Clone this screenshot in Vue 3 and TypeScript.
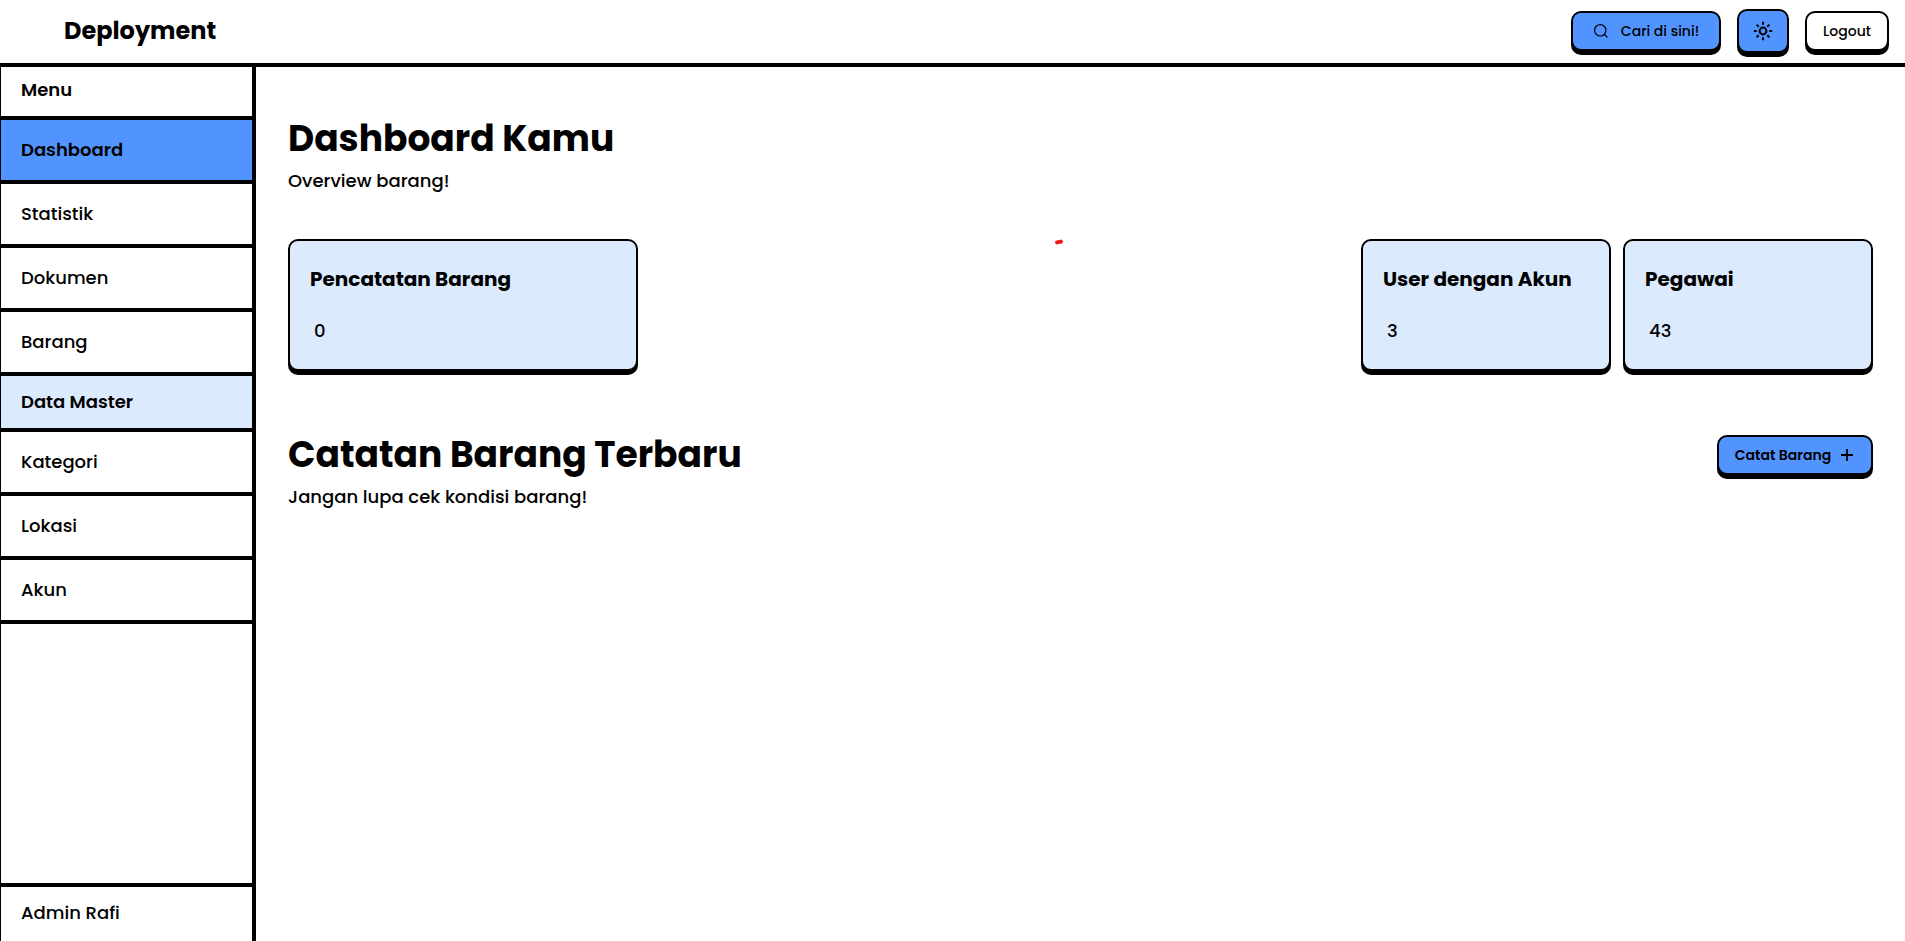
<script setup lang="ts">
interface MenuItem {
  label: string
  active?: boolean
}

const mainMenu: MenuItem[] = [
  { label: 'Dashboard', active: true },
  { label: 'Statistik' },
  { label: 'Dokumen' },
  { label: 'Barang' },
]
const masterMenu: MenuItem[] = [{ label: 'Kategori' }, { label: 'Lokasi' }, { label: 'Akun' }]
</script>

<template>
  <div class="app">
    <header class="topbar">
      <a class="brand" href="#">Deployment</a>
      <div class="actions">
        <button class="btn primary search" type="button">
          <svg width="16" height="16" viewBox="0 0 16 16" fill="none" stroke="currentColor" stroke-width="1.2" stroke-linecap="round">
            <circle cx="7.3" cy="7.3" r="5.7" />
            <path d="M11.5 11.5L14.2 14.2" />
          </svg>
          Cari di sini!
        </button>
        <button class="btn primary theme" type="button" aria-label="Tema">
          <svg width="20" height="20" viewBox="0 0 20 20" fill="none" stroke="currentColor" stroke-width="2">
            <circle cx="10" cy="10" r="3.4" />
            <path d="M10 .8v3M10 16.2v3M.8 10h3M16.2 10h3M3.6 3.6l2.1 2.1M14.3 14.3l2.1 2.1M3.6 16.4l2.1-2.1M14.3 5.7l2.1-2.1" />
          </svg>
        </button>
        <button class="btn" type="button">Logout</button>
      </div>
    </header>

    <div class="body">
      <aside class="sidebar">
        <div class="group">Menu</div>
        <nav aria-label="Menu">
          <a v-for="item in mainMenu" :key="item.label" href="#" class="item" :class="{ active: item.active }">{{ item.label }}</a>
        </nav>
        <div class="group tinted">Data Master</div>
        <nav aria-label="Data Master">
          <a v-for="item in masterMenu" :key="item.label" href="#" class="item">{{ item.label }}</a>
        </nav>
        <div class="user">Admin Rafi</div>
      </aside>

      <main class="content">
        <section>
          <h1>Dashboard Kamu</h1>
          <p class="lead">Overview barang!</p>
        </section>

        <section class="stats">
          <article class="card wide">
            <h2>Pencatatan Barang</h2>
            <p>0</p>
          </article>
          <div class="spark">
            <svg width="8" height="6" viewBox="0 0 8 6">
              <path d="M2.1 3.4L5.9 2.6" stroke="#ee1515" stroke-width="4" stroke-linecap="round" />
            </svg>
          </div>
          <article class="card">
            <h2>User dengan Akun</h2>
            <p>3</p>
          </article>
          <article class="card">
            <h2>Pegawai</h2>
            <p>43</p>
          </article>
        </section>

        <section class="latest">
          <div>
            <h1>Catatan Barang Terbaru</h1>
            <p class="lead">Jangan lupa cek kondisi barang!</p>
          </div>
          <button class="btn primary add" type="button">
            Catat Barang
            <svg width="16" height="16" viewBox="0 0 16 16" fill="none" stroke="currentColor" stroke-width="1.8">
              <path d="M8 2v12M2 8h12" />
            </svg>
          </button>
        </section>
      </main>
    </div>
  </div>
</template>

<style>
body {
  margin: 0;
  background: #fff;
}
</style>

<style scoped>
.app {
  display: flex;
  flex-direction: column;
  min-height: 100vh;
  color: #000;
  font-family: Poppins, Inter, "Open Sans", sans-serif;
  font-size: 18px;
  font-weight: 500;
  line-height: 28px;
}
.app * {
  box-sizing: border-box;
}
h1,
h2,
p {
  margin: 0;
}
a {
  color: inherit;
  text-decoration: none;
}
.topbar {
  display: flex;
  align-items: center;
  justify-content: space-between;
  height: 67px;
  padding: 3px 16px 0 64px;
  border-bottom: 4px solid #000;
}
.brand {
  font-size: 24px;
  font-weight: 700;
  line-height: 32px;
  padding-bottom: 4px;
}
.actions {
  display: flex;
  align-items: center;
  gap: 16px;
  padding-bottom: 4px;
}
.btn {
  display: inline-flex;
  align-items: center;
  justify-content: center;
  height: 40px;
  min-width: 84px;
  padding: 0;
  border: 2px solid #000;
  border-radius: 10px;
  background: #fff;
  box-shadow: 0 4px 0 #000;
  color: #000;
  font-family: inherit;
  font-size: 14px;
  font-weight: 500;
  white-space: nowrap;
}
.btn.primary {
  background: #5294ff;
}
.btn.search {
  width: 150px;
  gap: 12px;
}
.btn.theme {
  width: 52px;
  min-width: 52px;
  height: 44px;
}
.btn.add {
  width: 156px;
  gap: 8px;
  font-weight: 600;
}
.body {
  display: flex;
  flex: 1;
}
.sidebar {
  display: flex;
  flex-direction: column;
  flex: none;
  width: 256px;
  border-left: 1px solid #000;
  border-right: 4px solid #000;
}
.group {
  padding: 9px 20px 12px;
  border-bottom: 4px solid #000;
  font-weight: 600;
}
.group.tinted {
  padding: 12px 20px;
  background: #dceafe;
}
.item {
  display: block;
  padding: 16px 20px;
  border-bottom: 4px solid #000;
}
.item.active {
  background: #5294ff;
  font-weight: 600;
}
.user {
  margin-top: auto;
  padding: 12px 20px 14px;
  border-top: 4px solid #000;
}
.content {
  flex: 1;
  min-width: 0;
  padding: 52px 32px 32px;
}
h1 {
  font-size: 36px;
  font-weight: 700;
  line-height: 40px;
}
.lead {
  margin-top: 8px;
}
.stats {
  display: flex;
  gap: 12px;
  margin-top: 44px;
}
.card {
  flex: none;
  width: 250px;
  height: 132px;
  padding: 24px 20px;
  border: 2px solid #000;
  border-radius: 10px;
  background: #dceafe;
  box-shadow: 0 4px 0 #000;
}
.card.wide {
  width: 350px;
}
.card h2 {
  font-size: 20px;
  font-weight: 700;
  line-height: 28px;
}
.card p {
  margin: 24px 0 0 4px;
}
.spark {
  flex: 1;
  line-height: 0;
}
.spark svg {
  margin-left: 58%;
}
.latest {
  display: flex;
  align-items: flex-start;
  justify-content: space-between;
  margin-top: 64px;
}
</style>
